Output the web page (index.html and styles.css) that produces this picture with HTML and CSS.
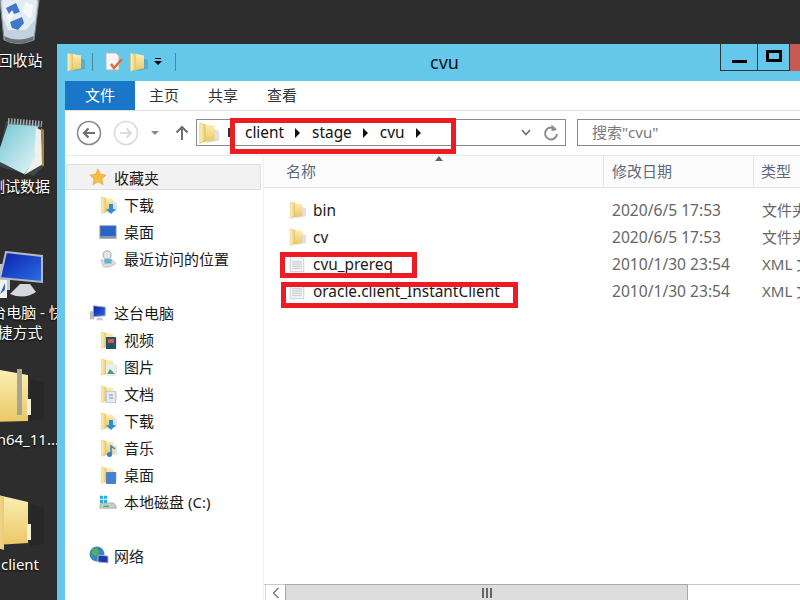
FILE: index.html
```html
<!DOCTYPE html>
<html>
<head>
    <title>cvu</title>
    <meta charset="UTF-8">
    <link rel="stylesheet" href="styles.css">
</head>
<body>
    <svg class="defs" width="0" height="0">
        <defs>
            <linearGradient id="folderBody" x1="0" y1="0" x2="0" y2="1">
                <stop offset="0" stop-color="#fdf0b4"/>
                <stop offset="1" stop-color="#e9c766"/>
            </linearGradient>
            <linearGradient id="folderFlap" x1="0" y1="0" x2="1" y2="0">
                <stop offset="0" stop-color="#fff4c4"/>
                <stop offset="1" stop-color="#e8ca70"/>
            </linearGradient>
            <linearGradient id="screenBlue" x1="0" y1="0" x2="1" y2="1">
                <stop offset="0" stop-color="#0a1ea8"/>
                <stop offset="1" stop-color="#2d6fe6"/>
            </linearGradient>
            <linearGradient id="padBlue" x1="0" y1="0" x2="1" y2="1">
                <stop offset="0" stop-color="#6fc4d2"/>
                <stop offset="1" stop-color="#e8f7f8"/>
            </linearGradient>
            <symbol id="folder" viewBox="0 0 20 20">
                <path d="M9 4 L20 8 V17 L9 19Z" fill="#000" opacity=".12"/>
                <path d="M5 1.5 L16 3.5 V16.5 L5 18.5Z" fill="url(#folderBody)"/>
                <path d="M2.5 1 L7.5 2.5 V17 L2.5 19.5Z" fill="url(#folderFlap)" stroke="#dcbc60" stroke-width=".5"/>
            </symbol>
            <symbol id="file" viewBox="0 0 20 20">
                <path d="M2.5 1.5 H14 L17.5 5 V18.5 H2.5Z" fill="#f4f6f8" stroke="#c4cad0" stroke-width="1"/>
                <path d="M4.5 7.5 H15.5 M4.5 10 H15.5 M4.5 12.5 H15.5 M4.5 15 H15.5" stroke="#cdd6de" stroke-width="1.4"/>
            </symbol>
            <symbol id="pc" viewBox="0 0 20 20">
                <rect x="1" y="8" width="5" height="9" fill="#b8bcc0"/>
                <path d="M5 2 L18 3.5 V13 L5 14Z" fill="url(#screenBlue)" stroke="#9aa0a8" stroke-width="1"/>
                <path d="M9 15 H14 L16 18 H8Z" fill="#c8ccd0"/>
            </symbol>
        </defs>
    </svg>

    <div class="desk-icon desk-bin">
        <svg class="desk-art" width="60" height="60" viewBox="-10 0 60 60">
            <path d="M0 10 L39 10 L34 50 Q18 57 4 50Z" fill="#c3d2de" stroke="#7f8c96"/>
            <path d="M2 10 H37 L35 30 L26 40 L8 40 L3 28Z" fill="#e4ecf3"/>
            <path d="M26 12 L34 16 L30 28 L22 22Z M6 26 L14 20 L10 36Z" fill="#f6f9fc"/>
            <path d="M6 18 L16 13 L20 22 L14 24 L12 20 L9 24Z M10 32 L22 27 L24 33 L18 40 L12 38Z" fill="#3f78c8"/>
            <path d="M4 46 Q18 53 34 46 L33 50 Q18 57 5 50Z" fill="#6b7177"/>
        </svg>
        <div class="desk-label">回收站</div>
    </div>
    <div class="desk-icon desk-notes">
        <svg class="desk-art" width="60" height="60" viewBox="-10 0 60 60">
            <path d="M6 5 L40 8 L44 50 L34 60 L-4 50Z" fill="#3a4648"/>
            <path d="M8 8 L38 10 L34 46 L24 58 L-4 44Z" fill="url(#padBlue)"/>
            <path d="M36 12 L41 14 L43 48 L24 59 L34 44Z" fill="#eff2ec"/>
            <path d="M41 12 L44 14 L44 50 L42 50Z" fill="#a9833c"/>
            <path d="M8 5 L42 8" stroke="#a6afb2" stroke-width="6" stroke-dasharray="1.5 1.5"/>
        </svg>
        <div class="desk-label">测试数据</div>
    </div>
    <div class="desk-icon desk-pc">
        <svg class="desk-art" width="60" height="60" viewBox="-10 0 60 60">
            <rect x="-2" y="22" width="12" height="26" fill="#c4c8cc"/>
            <path d="M6 10 L42 14 V40 L0 36Z" fill="url(#screenBlue)" stroke="#b4b8c0" stroke-width="2"/>
            <path d="M20 42 H30 L36 50 Q24 58 10 52Z" fill="#d4d8da"/>
            <rect x="-2" y="38" width="9" height="18" fill="#f2f2f2"/>
            <path d="M0 52 L5 41 V48Z" fill="#2a68b8"/>
        </svg>
        <div class="desk-label">这台电脑 - 快<br>捷方式</div>
    </div>
    <div class="desk-icon desk-zip">
        <svg class="desk-art" width="60" height="60" viewBox="-10 0 60 60">
            <path d="M30 10 L44 14 V50 L30 52Z" fill="#000" opacity=".12"/>
            <path d="M-6 0 L28 6 V52 L-6 53Z" fill="url(#folderBody)"/>
            <path d="M17 0 H22 V46 H17Z" fill="#a8a494"/>
            <path d="M27 30 H31 V46 H27Z" fill="#f4f0d8"/>
        </svg>
        <div class="desk-label">win64_11...</div>
    </div>
    <div class="desk-icon desk-client">
        <svg class="desk-art" width="60" height="60" viewBox="-10 0 60 60">
            <path d="M30 10 L44 14 V50 L30 52Z" fill="#000" opacity=".12"/>
            <path d="M-6 0 L28 8 V49 L-6 51Z" fill="url(#folderBody)"/>
            <path d="M-10 -2 L4 3 V56 L-10 52Z" fill="url(#folderFlap)"/>
            <path d="M27 30 H31 V46 H27Z" fill="#f4f0d8"/>
        </svg>
        <div class="desk-label">client</div>
    </div>

    <div class="window">
        <div class="titlebar">
            <div class="quick">
                <svg class="q-folder" width="20" height="20"><use href="#folder"/></svg>
                <span class="q-sep"></span>
                <svg class="q-doc" width="20" height="20" viewBox="0 0 20 20">
                    <path d="M2 1 H12 L15 4 V18 H2Z" fill="#f6f6f6" stroke="#b8b8b8"/>
                    <path d="M7 12 L10 16 L18 7" fill="none" stroke="#e07040" stroke-width="2.6"/>
                </svg>
                <svg class="q-folder2" width="20" height="20"><use href="#folder"/></svg>
                <span class="q-drop"></span>
                <span class="q-sep"></span>
            </div>
            <div class="title">cvu</div>
            <div class="win-btns">
                <div class="win-btn btn-min"><span></span></div>
                <div class="win-btn btn-max"><span></span></div>
                <div class="win-btn btn-close"></div>
            </div>
        </div>

        <div class="tabs">
            <div class="tab tab-file">文件</div>
            <div class="tab">主页</div>
            <div class="tab">共享</div>
            <div class="tab">查看</div>
        </div>

        <div class="navbar">
            <svg class="nav-back" width="26" height="26" viewBox="0 0 26 26">
                <circle cx="13" cy="13" r="11.5" fill="#fff" stroke="#8a8a8a" stroke-width="1.6"/>
                <path d="M19 13 H8 M12.5 8.5 L8 13 L12.5 17.5" fill="none" stroke="#6e6e6e" stroke-width="2.2"/>
            </svg>
            <svg class="nav-fwd" width="26" height="26" viewBox="0 0 26 26">
                <circle cx="13" cy="13" r="11.5" fill="#fff" stroke="#dcdcdc" stroke-width="1.6"/>
                <path d="M7 13 H18 M13.5 8.5 L18 13 L13.5 17.5" fill="none" stroke="#dcdcdc" stroke-width="2.2"/>
            </svg>
            <span class="nav-drop"></span>
            <svg class="nav-up" width="16" height="18" viewBox="0 0 16 18">
                <path d="M8 16 V3 M2.5 8.5 L8 3 L13.5 8.5" fill="none" stroke="#6e6e6e" stroke-width="2"/>
            </svg>
            <div class="address">
                <svg class="addr-folder" width="22" height="22"><use href="#folder"/></svg>
                <span class="crumb-start"></span>
                <span class="crumb crumb-first">client</span><span class="crumb-arrow"></span>
                <span class="crumb">stage</span><span class="crumb-arrow"></span>
                <span class="crumb">cvu</span><span class="crumb-arrow"></span>
                <svg class="addr-chevron" width="10" height="7" viewBox="0 0 10 7">
                    <path d="M1 1 L5 5.5 L9 1" fill="none" stroke="#6e6e6e" stroke-width="1.6"/>
                </svg>
                <svg class="addr-refresh" width="16" height="18" viewBox="0 0 16 18">
                    <path d="M12.6 5.6 A6 6 0 1 0 14 10" fill="none" stroke="#8a8a8a" stroke-width="2"/>
                    <path d="M8.5 0.5 V7 L14 6Z" fill="#8a8a8a"/>
                </svg>
            </div>
            <div class="search">搜索"cvu"</div>
        </div>

        <div class="main">
            <div class="sidebar">
                <div class="group">
                    <div class="nav-row top selected">
                        <svg class="nav-ico" width="18" height="18" viewBox="0 0 20 20">
                            <path d="M10 1 L12.8 7 L19 7.8 L14.4 12.2 L15.6 18.6 L10 15.4 L4.4 18.6 L5.6 12.2 L1 7.8 L7.2 7Z" fill="#f8bd3e" stroke="#dc9c2c" stroke-width=".6"/>
                        </svg>收藏夹
                    </div>
                    <div class="nav-row child">
                        <span class="ico-wrap">
                            <svg width="18" height="18"><use href="#folder"/></svg>
                            <svg class="badge" width="10" height="10" viewBox="0 0 10 10"><path d="M3 0 H7 V5 H10 L5 10 L0 5 H3Z" fill="#2b8fd8"/></svg>
                        </span>下载
                    </div>
                    <div class="nav-row child">
                        <svg class="nav-ico" width="18" height="18" viewBox="0 0 20 20">
                            <rect x="0.5" y="2.5" width="19" height="15" fill="#8a98a8"/>
                            <rect x="1.5" y="3.5" width="17" height="11" fill="#2a64c8"/>
                        </svg>桌面
                    </div>
                    <div class="nav-row child">
                        <svg class="nav-ico" width="18" height="18" viewBox="0 0 20 20">
                            <circle cx="9" cy="5.5" r="4.5" fill="#dfe6ea" stroke="#a0a8ae"/>
                            <path d="M2 11 H15 L19 15 L12 19 H5Z" fill="#d8dcde" stroke="#a6acb0" stroke-width=".6"/>
                            <rect x="6" y="10" width="8" height="5" fill="#6cb0c8"/>
                        </svg>最近访问的位置
                    </div>
                </div>
                <div class="group">
                    <div class="nav-row top">
                        <svg class="nav-ico" width="18" height="18"><use href="#pc"/></svg>这台电脑
                    </div>
                    <div class="nav-row child">
                        <span class="ico-wrap">
                            <svg width="18" height="18"><use href="#folder"/></svg>
                            <svg class="badge" width="10" height="12" viewBox="0 0 10 12"><rect width="10" height="12" fill="#24506c"/><rect x="2" y="2" width="6" height="4" fill="#d0603c"/></svg>
                        </span>视频
                    </div>
                    <div class="nav-row child">
                        <span class="ico-wrap">
                            <svg width="18" height="18"><use href="#folder"/></svg>
                            <svg class="badge" width="10" height="12" viewBox="0 0 10 12"><rect width="10" height="12" fill="#e8eef0"/><path d="M1 10 L4 5 L9 10Z" fill="#4c9a78"/></svg>
                        </span>图片
                    </div>
                    <div class="nav-row child">
                        <span class="ico-wrap">
                            <svg width="18" height="18"><use href="#folder"/></svg>
                            <svg class="badge" width="10" height="12" viewBox="0 0 10 12"><rect width="10" height="12" fill="#e4eaf0" stroke="#a8b0b8"/><path d="M3 4 H7 M3 7 H7" stroke="#8098b0"/></svg>
                        </span>文档
                    </div>
                    <div class="nav-row child">
                        <span class="ico-wrap">
                            <svg width="18" height="18"><use href="#folder"/></svg>
                            <svg class="badge" width="10" height="10" viewBox="0 0 10 10"><path d="M3 0 H7 V5 H10 L5 10 L0 5 H3Z" fill="#2b8fd8"/></svg>
                        </span>下载
                    </div>
                    <div class="nav-row child">
                        <span class="ico-wrap">
                            <svg width="18" height="18"><use href="#folder"/></svg>
                            <svg class="badge" width="10" height="12" viewBox="0 0 10 12"><circle cx="3.5" cy="9.5" r="2.5" fill="#2b80d0"/><path d="M5 9 V1 L9 4" fill="none" stroke="#2b80d0" stroke-width="1.5"/></svg>
                        </span>音乐
                    </div>
                    <div class="nav-row child">
                        <span class="ico-wrap">
                            <svg width="18" height="18"><use href="#folder"/></svg>
                            <svg class="badge" width="10" height="12" viewBox="0 0 10 12"><rect width="10" height="12" fill="#3f80d8" stroke="#7a8490"/></svg>
                        </span>桌面
                    </div>
                    <div class="nav-row child">
                        <svg class="nav-ico" width="18" height="18" viewBox="0 0 20 20">
                            <path d="M1 3 H4.5 V6.5 H1Z M5.5 3 H9 V6.5 H5.5Z M1 7.5 H4.5 V11 H1Z M5.5 7.5 H9 V11 H5.5Z" fill="#18b4ee"/>
                            <path d="M2 11 H16 L19 14 V17 H1 V14Z" fill="#c6cccc" stroke="#8c9494" stroke-width=".6"/>
                            <rect x="5" y="14" width="6" height="1.6" fill="#44b060"/>
                        </svg>本地磁盘 (C:)
                    </div>
                </div>
                <div class="group">
                    <div class="nav-row top">
                        <svg class="nav-ico net-ico" width="20" height="20" viewBox="0 0 20 20">
                            <circle cx="8" cy="8" r="7.5" fill="#3c86c0"/>
                            <path d="M3 4 L8 2 L10 6 L7 10 L3 8Z M10 11 L13 10 L12 14Z" fill="#58b058"/>
                            <path d="M9 9 L19 10 V17 L9 16Z" fill="#1a3ca8" stroke="#b0b8c0"/>
                        </svg>网络
                    </div>
                </div>
            </div>

            <div class="content">
                <div class="col-head">
                    <div class="col col-name">名称<span class="sort-arrow"></span></div>
                    <div class="col col-date">修改日期</div>
                    <div class="col col-type">类型</div>
                </div>
                <div class="file-list">
                    <div class="file-row">
                        <div class="file-name"><svg width="18" height="18"><use href="#folder"/></svg>bin</div>
                        <div class="file-date">2020/6/5 17:53</div>
                        <div class="file-type">文件夹</div>
                    </div>
                    <div class="file-row">
                        <div class="file-name"><svg width="18" height="18"><use href="#folder"/></svg>cv</div>
                        <div class="file-date">2020/6/5 17:53</div>
                        <div class="file-type">文件夹</div>
                    </div>
                    <div class="file-row">
                        <div class="file-name"><svg width="18" height="18"><use href="#file"/></svg>cvu_prereq</div>
                        <div class="file-date">2010/1/30 23:54</div>
                        <div class="file-type">XML 文档</div>
                    </div>
                    <div class="file-row">
                        <div class="file-name"><svg width="18" height="18"><use href="#file"/></svg>oracle.client_InstantClient</div>
                        <div class="file-date">2010/1/30 23:54</div>
                        <div class="file-type">XML 文档</div>
                    </div>
                </div>
                <div class="hscroll">
                    <div class="hs-left"><svg width="8" height="12" viewBox="0 0 8 12"><path d="M6.5 1 L1.5 6 L6.5 11" fill="none" stroke="#6e6e6e" stroke-width="1.2"/></svg></div>
                    <div class="hs-thumb"><span class="grip"></span></div>
                </div>
            </div>
        </div>

        <div class="mark mark-address"></div>
        <div class="mark mark-prereq"></div>
        <div class="mark mark-oracle"></div>
    </div>
</body>
</html>
```

FILE: styles.css
```css
html, body {
    margin: 0;
    height: 100%;
}
body {
    position: relative;
    overflow: hidden;
    background-color: #2d2d2d;
    font-family: "Noto Sans", "Noto Sans CJK SC", sans-serif;
    font-size: 15px;
    color: #1a1a1a;
}
.defs {
    position: absolute;
}

/* desktop */
.desk-icon {
    position: absolute;
    left: -25px;
    width: 90px;
    text-align: center;
}
.desk-art {
    display: block;
    margin: 0 auto;
    overflow: visible;
}
.desk-label {
    color: #fff;
    line-height: 20px;
    white-space: nowrap;
    text-shadow: 0 1px 2px #000;
}
.desk-bin { top: -10px; }
.desk-notes { top: 116px; }
.desk-pc { top: 242px; }
.desk-zip { top: 369px; }
.desk-client { top: 494px; }

/* window */
.window {
    position: absolute;
    left: 57px;
    top: 44px;
    right: 0;
    bottom: 0;
    display: flex;
    flex-direction: column;
    padding-left: 8px;
    background-color: #65c8ea;
}
.titlebar {
    position: relative;
    height: 37px;
    flex: none;
    margin-left: -8px;
}
.quick {
    display: flex;
    align-items: center;
    height: 36px;
    padding-left: 8px;
}
.q-sep {
    width: 1px;
    height: 18px;
    background-color: #3f8ba6;
    margin-left: 7px;
}
.q-doc {
    margin-left: 11px;
}
.q-folder2 {
    margin-left: 4px;
}
.q-drop {
    position: relative;
    width: 6px;
    height: 7px;
    margin: 0 7px 0 7px;
    border-top: 1px solid #000;
}
.q-drop::after {
    content: "";
    position: absolute;
    left: -1px;
    top: 2px;
    border-left: 4px solid transparent;
    border-right: 4px solid transparent;
    border-top: 4px solid #000;
}
.title {
    position: absolute;
    left: 373px;
    top: 7px;
    font-size: 18px;
    line-height: 22px;
    color: #111;
}
.win-btns {
    position: absolute;
    left: 663px;
    top: 0;
    display: flex;
}
.win-btn {
    height: 27px;
    box-sizing: border-box;
    border: 1px solid #333;
    border-top: none;
    display: flex;
    justify-content: center;
    align-items: center;
}
.btn-min {
    width: 37px;
    border-right: none;
}
.btn-min span {
    width: 15px;
    height: 3px;
    background-color: #000;
    margin-top: 8px;
}
.btn-max {
    width: 33px;
}
.btn-max span {
    width: 16px;
    height: 12px;
    box-sizing: border-box;
    border: 3px solid #000;
    margin-top: -3px;
}
.btn-close {
    width: 30px;
    border: none;
    background-color: #c75a50;
}

/* ribbon tabs */
.tabs {
    display: flex;
    flex: none;
    height: 29px;
    background-color: #fff;
    border-bottom: 1px solid #e0e0e0;
    line-height: 28px;
}
.tab {
    padding: 0 14px;
    margin-right: 1px;
    color: #333;
}
.tab-file {
    width: 70px;
    box-sizing: border-box;
    padding: 0;
    margin: 0;
    text-align: center;
    background-color: #1a77c8;
    color: #fff;
}

/* address row */
.navbar {
    display: flex;
    align-items: center;
    flex: none;
    height: 45px;
    box-sizing: border-box;
    padding: 0 0 1px 11px;
    background-color: #fff;
    border-bottom: 1px solid #e8e8e8;
}
.navbar > * {
    flex: none;
}
.nav-fwd {
    margin-left: 11px;
}
.nav-drop {
    margin-left: 12px;
    border-left: 4px solid transparent;
    border-right: 4px solid transparent;
    border-top: 4px solid #8a8a8a;
}
.nav-up {
    margin-left: 15px;
}
.address {
    display: flex;
    align-items: center;
    width: 370px;
    height: 27px;
    box-sizing: border-box;
    margin-left: 6px;
    padding-right: 6px;
    border: 1px solid #8a8a8a;
    font-size: 15.4px;
    color: #111;
}
.crumb-start {
    width: 2px;
    height: 9px;
    margin-left: 9px;
    background-color: #333;
}
.crumb {
    line-height: 24px;
}
.crumb-first {
    margin-left: 15px;
}
.crumb-arrow {
    margin: 0 12px 0 11px;
    border-top: 5px solid transparent;
    border-bottom: 5px solid transparent;
    border-left: 5px solid #111;
}
.addr-chevron {
    margin-left: auto;
}
.addr-refresh {
    margin-left: 12px;
}
.search {
    width: 230px;
    height: 27px;
    box-sizing: border-box;
    margin-left: 11px;
    padding-left: 14px;
    border: 1px solid #8a8a8a;
    border-right: none;
    color: #7a7a7a;
    line-height: 25px;
    white-space: nowrap;
}

/* left tree */
.main {
    display: flex;
    flex: 1;
    min-height: 0;
    background-color: #fff;
}
.sidebar {
    width: 199px;
    flex: none;
    box-sizing: border-box;
    padding-top: 8px;
    border-right: 1px solid #f0f0f0;
}
.group + .group {
    margin-top: 27px;
}
.nav-row {
    display: flex;
    align-items: center;
    height: 27px;
    white-space: nowrap;
}
.nav-row svg {
    flex: none;
}
.top {
    padding-left: 24px;
}
.top .nav-ico {
    margin-right: 7px;
}
.top .net-ico {
    margin-right: 5px;
}
.child {
    padding-left: 34px;
}
.child .nav-ico {
    margin-right: 7px;
}
.selected {
    height: 26px;
    margin: 0 2px 1px 1px;
    padding-left: 22px;
    box-sizing: border-box;
    background-color: #f2f2f2;
    border: 1px solid #dedede;
}
.ico-wrap {
    position: relative;
    display: flex;
    margin-right: 7px;
}
.badge {
    position: absolute;
    right: 1px;
    bottom: 0;
}

/* file list */
.content {
    flex: 1;
    min-width: 0;
    display: flex;
    flex-direction: column;
}
.col-head {
    display: flex;
    flex: none;
    height: 32px;
    box-sizing: border-box;
    border-bottom: 1px solid #e5e5e5;
    background-color: #fcfcfc;
    color: #5a6a80;
    line-height: 31px;
    white-space: nowrap;
}
.col {
    box-sizing: border-box;
    border-right: 1px solid #e5e5e5;
}
.col-name {
    position: relative;
    width: 340px;
    padding-left: 22px;
}
.col-date {
    width: 150px;
    padding-left: 8px;
}
.col-type {
    flex: 1;
    padding-left: 7px;
    border-right: none;
}
.sort-arrow {
    position: absolute;
    left: 171px;
    top: 0;
    border-left: 4px solid transparent;
    border-right: 4px solid transparent;
    border-bottom: 5px solid #52647e;
}
.file-list {
    flex: 1;
    padding-top: 8px;
}
.file-row {
    display: flex;
    height: 27px;
    align-items: center;
    white-space: nowrap;
}
.file-name {
    display: flex;
    align-items: center;
    flex: none;
    gap: 7px;
    width: 340px;
    box-sizing: border-box;
    padding: 1px 0 0 24px;
    font-size: 15.4px;
    color: #1a1a1a;
}
.file-date {
    flex: none;
    width: 150px;
    padding-left: 8px;
    box-sizing: border-box;
    font-size: 15.6px;
    color: #666;
}
.file-type {
    padding-left: 8px;
    color: #666;
}
.hscroll {
    display: flex;
    flex: none;
    height: 16px;
    box-sizing: border-box;
    border-top: 1px solid #c8c8c8;
}
.hs-left {
    width: 20px;
    margin-left: 1px;
    display: flex;
    justify-content: center;
    align-items: center;
    border-left: 1px solid #d8d8d8;
    box-sizing: border-box;
}
.hs-thumb {
    width: 403px;
    box-sizing: border-box;
    background-color: #dcdcdc;
    border: 1px solid #a8a8a8;
    border-bottom: none;
    margin-top: -1px;
    display: flex;
    justify-content: center;
    align-items: center;
}
.grip {
    width: 10px;
    height: 10px;
    background: repeating-linear-gradient(90deg, #666 0, #666 2px, transparent 2px, transparent 4px);
}

/* red annotation boxes drawn over the shot */
.mark {
    position: absolute;
    box-sizing: border-box;
    border: 5px solid #ed1c24;
}
.mark-address {
    left: 173px;
    top: 74px;
    width: 226px;
    height: 36px;
}
.mark-prereq {
    left: 223px;
    top: 208px;
    width: 137px;
    height: 26px;
}
.mark-oracle {
    left: 224px;
    top: 238px;
    width: 237px;
    height: 26px;
}
```
